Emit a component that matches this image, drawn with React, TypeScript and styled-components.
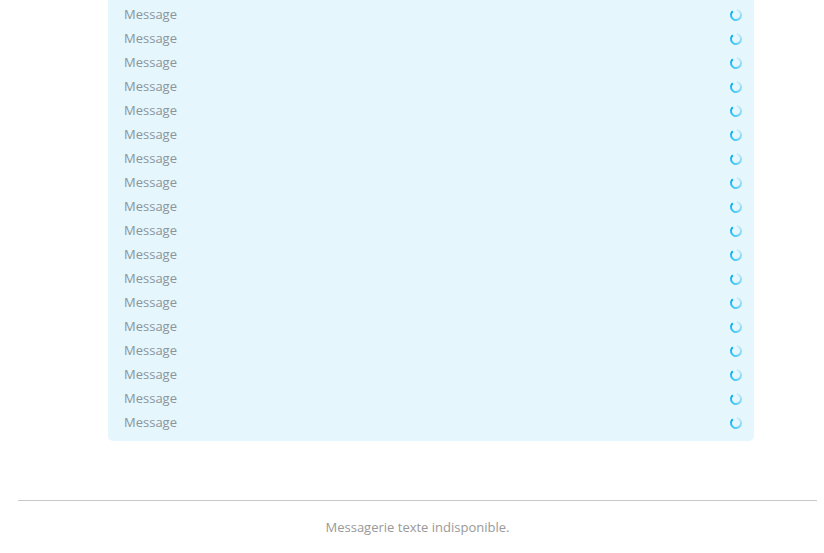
import React from 'react';
import styled, { createGlobalStyle } from 'styled-components';

const GlobalStyle = createGlobalStyle`
  body {
    margin: 0;
    background-color: #fff;
    font-family: 'Open Sans', 'Noto Sans', sans-serif;
    font-size: 13px;
  }
`;

const Page = styled.main`
  padding: 0 7px 0 18px;
`;

const MessageList = styled.ul`
  list-style: none;
  margin: 0 63px 0 90px;
  padding: 3px 12px 6px 16px;
  background-color: #e5f6fd;
  border-radius: 0 0 5px 5px;
`;

const MessageRow = styled.li`
  display: flex;
  align-items: center;
  justify-content: space-between;
  height: 24px;
`;

const MessageText = styled.span`
  align-self: flex-start;
  line-height: 22px;
  color: #8c9499;
`;

const Spinner = styled.svg`
  display: block;
  width: 12px;
  height: 12px;
`;

const Footer = styled.footer`
  margin-top: 59px;
  padding: 15px 0;
  border-top: 1px solid #c8c8c8;
  line-height: 22px;
  text-align: center;
  color: #999;
`;

const MESSAGE_COUNT = 18;

// Segments run counter-clockwise from the top left, fading towards the top
const SEGMENTS = 12;
const START_ANGLE = 230;
const SWEEP = 310;
const RADIUS = 5;

const pointAt = (angle: number) => {
  const rad = (angle * Math.PI) / 180;
  return `${(6 + RADIUS * Math.cos(rad)).toFixed(2)} ${(6 + RADIUS * Math.sin(rad)).toFixed(2)}`;
};

const SendingIcon: React.FC = () => (
  <Spinner viewBox="0 0 12 12" fill="none" stroke="#00aff0" strokeWidth="2" aria-hidden="true">
    {Array.from({ length: SEGMENTS }, (_, i) => {
      const from = START_ANGLE - (i * SWEEP) / SEGMENTS;
      const to = START_ANGLE - ((i + 1) * SWEEP) / SEGMENTS;
      return (
        <path
          key={i}
          d={`M${pointAt(from)}A${RADIUS} ${RADIUS} 0 0 0 ${pointAt(to)}`}
          opacity={1 - (i / SEGMENTS) * 0.95}
        />
      );
    })}
  </Spinner>
);

export default function App() {
  return (
    <>
      <GlobalStyle />
      <Page>
        <MessageList>
          {Array.from({ length: MESSAGE_COUNT }, (_, i) => (
            <MessageRow key={i}>
              <MessageText>Message</MessageText>
              <SendingIcon />
            </MessageRow>
          ))}
        </MessageList>
        <Footer>Messagerie texte indisponible.</Footer>
      </Page>
    </>
  );
}
